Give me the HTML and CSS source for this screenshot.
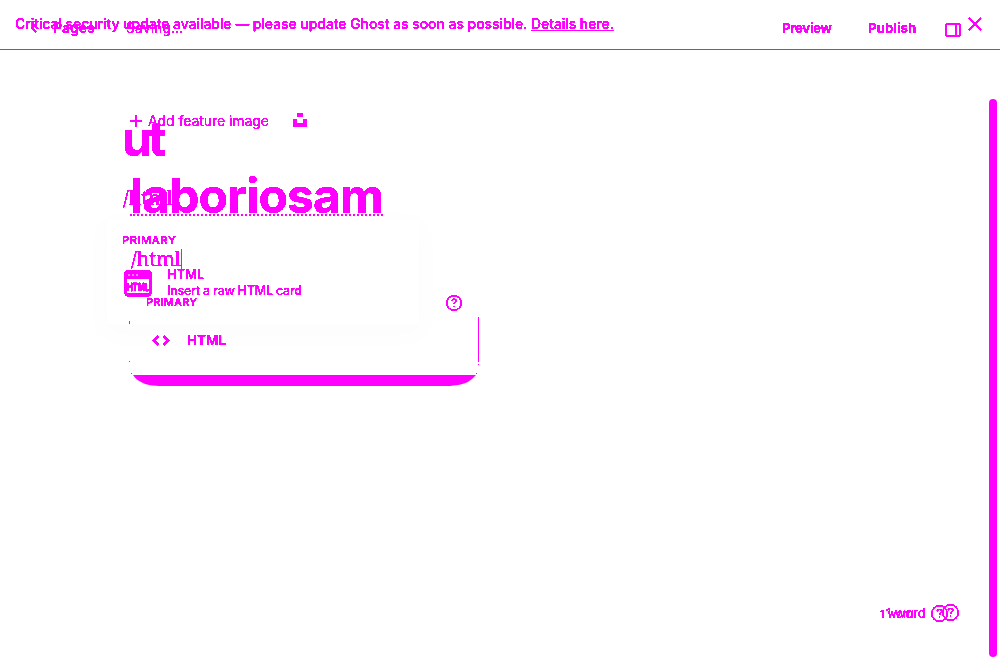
FILE: index.html
```html
<!DOCTYPE html>
<html lang="en">
<head>
<meta charset="utf-8">
<title>Ghost editor</title>
<link rel="stylesheet" href="styles.css">
</head>
<body>
<svg class="defs" width="0" height="0"><filter id="crisp" x="0" y="0" width="100%" height="100%" color-interpolation-filters="sRGB"><feComponentTransfer><feFuncA type="linear" slope="30" intercept="-7"/></feComponentTransfer></filter></svg>
<div class="stage">
  <div class="shade"></div>
  <div class="layer editor">
    <header class="header">
      <svg class="chevron" width="6" height="10" viewBox="0 0 6 10"><path d="M5 1L1 5l4 4"/></svg>
      <span class="pages">Pages</span><span class="saving">Saving...</span>
      <span class="preview">Preview</span><span class="publish">Publish</span>
      <svg class="panel" width="16" height="14" viewBox="0 0 16 14"><rect x="1" y="1" width="14" height="12" rx="1"/><path d="M11 1v12"/></svg>
    </header>
    <main class="content">
      <div class="feature">
        <svg width="12" height="12" viewBox="0 0 12 12"><path d="M6 0v12M0 6h12"/></svg>
        <span class="feature-text">Add feature image</span>
        <svg class="unsplash" width="14" height="14" viewBox="0 0 14 14"><path d="M4 0h6v4H4zM0 6h4v4h6V6h4v8H0z"/></svg>
      </div>
      <div class="title"><span class="title-text">laboriosam</span></div>
      <div class="slash">/html<i class="caret"></i></div>
      <div class="menu">
        <div class="menu-head"><span class="primary">PRIMARY</span><svg class="help" width="16" height="16" viewBox="0 0 16 16"><circle cx="8" cy="8" r="7.3"/><path d="M5.8 6.2c.1-1.5 1-2 2.2-2s2.2.8 2.2 1.9c0 1.3-2.1 1.5-2.1 3"/><path d="M8 10.7v1.3"/></svg></div>
        <div class="menu-item"><svg width="18" height="11" viewBox="0 0 18 11"><path d="M6.5 1L2 5.5 6.5 10M11.5 1L16 5.5 11.5 10"/></svg><span class="menu-label">HTML</span></div>
      </div>
    </main>
  </div>
  <div class="layer second">
    <div class="alert"><span class="alert-text">Critical security update available — please update Ghost as soon as possible. <u>Details here.</u></span><svg class="close" width="14" height="14" viewBox="0 0 14 14"><path d="M1 1l12 12M13 1L1 13"/></svg></div>
    <main class="content-two">
      <div class="ut">ut</div>
      <div class="slash-two">/html</div>
      <div class="primary-two">PRIMARY</div>
      <div class="card">
        <svg class="card-icon" width="28" height="27" viewBox="0 0 28 27"><rect x="1.5" y="1.5" width="25" height="23.5" rx="3"/><path class="fill" d="M2 2h24v7H2z"/><path class="dots" d="M4 5h2M8 5h2M12 5h2"/><text x="14" y="20.5" text-anchor="middle" textLength="22" lengthAdjust="spacingAndGlyphs">HTML</text></svg>
        <div class="card-copy"><div class="card-title">HTML</div><div class="card-desc">Insert a raw HTML card</div></div>
      </div>
    </main>
  </div>
  <svg class="menu-edge" width="350" height="70" viewBox="0 0 350 70"><path class="fill" d="M4 58H347C342 64 336 67 329 68C323 69 319 69 314 69H34C23 69 18 68 14 66C9 64 6 61 4 58z"/><path class="fill" d="M2 56h1v1H2zM347 56h1v1h-1zM349 0h1v45h-1zM349 47h1v1h-1zM0 4h1v3H0zM0 44h1v1H0z"/></svg>
  <footer class="words"><span class="count one">1 word</span><svg class="help h-one" width="17" height="17" viewBox="0 0 16 16"><circle cx="8" cy="8" r="7.3"/><path d="M5.8 6.2c.1-1.5 1-2 2.2-2s2.2.8 2.2 1.9c0 1.3-2.1 1.5-2.1 3"/><path d="M8 10.7v1.3"/></svg></footer>
  <footer class="words second-words"><span class="count">1 word</span><svg class="help" width="17" height="17" viewBox="0 0 16 16"><circle cx="8" cy="8" r="7.3"/><path d="M5.8 6.2c.1-1.5 1-2 2.2-2s2.2.8 2.2 1.9c0 1.3-2.1 1.5-2.1 3"/><path d="M8 10.7v1.3"/></svg></footer>
  <div class="scrollbar"></div>
</div>
</body>
</html>
```
FILE: styles.css
```css
* { box-sizing: border-box; }
body { margin: 0; background: #fff; }
.defs { position: absolute; }
.stage { position: relative; width: 1000px; height: 660px; overflow: hidden; color: #f0f; font-family: Inter, sans-serif; white-space: nowrap; }
.layer { position: absolute; inset: 0; filter: url(#crisp); }
svg { display: block; flex: none; overflow: visible; fill: none; stroke: #f0f; stroke-width: 1.5; }
.fill { fill: #f0f; stroke: none; }
.shade { position: absolute; left: 107px; top: 219px; width: 312px; height: 105px; background: #fff; box-shadow: 0 8px 24px 8px rgba(0, 0, 0, .01); }
.header { display: flex; align-items: center; height: 50px; padding: 6px 39px 0 31px; border-bottom: 1px solid #f0f; font-size: 14px; line-height: 20px; }
.pages { margin-left: 16px; width: 73px; font-weight: 600; }
.saving { flex: 1; letter-spacing: .05px; }
.preview { width: 86px; font-size: 13.3px; font-weight: 700; letter-spacing: -.35px; }
.publish { width: 77px; font-size: 13.3px; font-weight: 700; }
.panel { margin-top: 4px; }
.content { padding: 60px 0 0 130px; }
.feature { display: flex; align-items: center; height: 20px; font-size: 14px; letter-spacing: -.06px; }
.feature svg { position: relative; top: 1px; }
.feature-text { margin-left: 6px; width: 145px; }
.feature .unsplash { fill: #f0f; stroke: none; top: 0; }
.title { margin-top: 35px; height: 62px; font-size: 48px; line-height: 62px; font-weight: 700; }
.title-text { display: inline-block; height: 51px; width: 253px; line-height: 62px; letter-spacing: -.85px; border-bottom: 2px dotted #f0f; }
.slash, .slash-two { font-family: "Noto Serif", "DejaVu Serif", serif; font-size: 20px; line-height: 30px; }
.slash { display: flex; margin-top: 17px; height: 30px; align-items: center; padding-left: 1px; letter-spacing: -.2px; }
.caret { width: 1px; height: 20px; background: #f0f; }
.menu { width: 349px; padding: 19px 17px 0 16px; }
.menu-head { display: flex; justify-content: space-between; align-items: center; height: 18px; }
.menu-head .help { position: relative; top: 1px; }
.primary { font-size: 11px; font-weight: 600; letter-spacing: .15px; }
.menu-item { display: flex; align-items: center; height: 20px; margin: 19px 0 0 6px; font-size: 13.5px; font-weight: 600; }
.menu-item svg { stroke-width: 2.4; }
.menu-label { margin-left: 17px; }
.alert { display: flex; align-items: center; justify-content: space-between; height: 48px; padding: 0 18px 0 15px; font-size: 14px; font-weight: 500; letter-spacing: -.062px; }
.alert-text { padding-bottom: 2px; }
.content-two { padding: 60px 0 0 122px; }
.ut { height: 62px; font-size: 48px; line-height: 62px; font-weight: 700; letter-spacing: -3.5px; }
.slash-two { margin-top: 13px; height: 30px; padding-left: 1px; letter-spacing: -.2px; }
.primary-two { margin-top: 19px; height: 16px; font-size: 11px; line-height: 16px; font-weight: 600; letter-spacing: .6px; }
.card { display: flex; margin-top: 18px; padding-left: 2px; }
.card-icon { margin-top: 4px; stroke-width: 3; }
.card-icon text { fill: #f0f; stroke: #f0f; stroke-width: .3; font: 700 10px Inter, sans-serif; }
.dots { stroke: #fff; stroke-width: 1; }
.card-copy { margin-left: 15px; font-size: 13px; line-height: 16px; font-weight: 500; }
.card-desc { padding-top: 1px; font-size: 12.5px; font-weight: 500; letter-spacing: -.22px; }
.menu-edge { position: absolute; left: 129px; top: 317px; }
.words { position: absolute; left: 880px; top: 605px; width: 68px; height: 17px; display: flex; align-items: center; justify-content: space-between; font-size: 11px; filter: url(#crisp); }
.second-words { left: 886px; top: 604px; width: 73px; font-size: 13px; }
.help { stroke-width: 1.2; }
.scrollbar { position: absolute; left: 989px; top: 99px; width: 8px; height: 558px; border-radius: 4px; background: #f0f; }
```
